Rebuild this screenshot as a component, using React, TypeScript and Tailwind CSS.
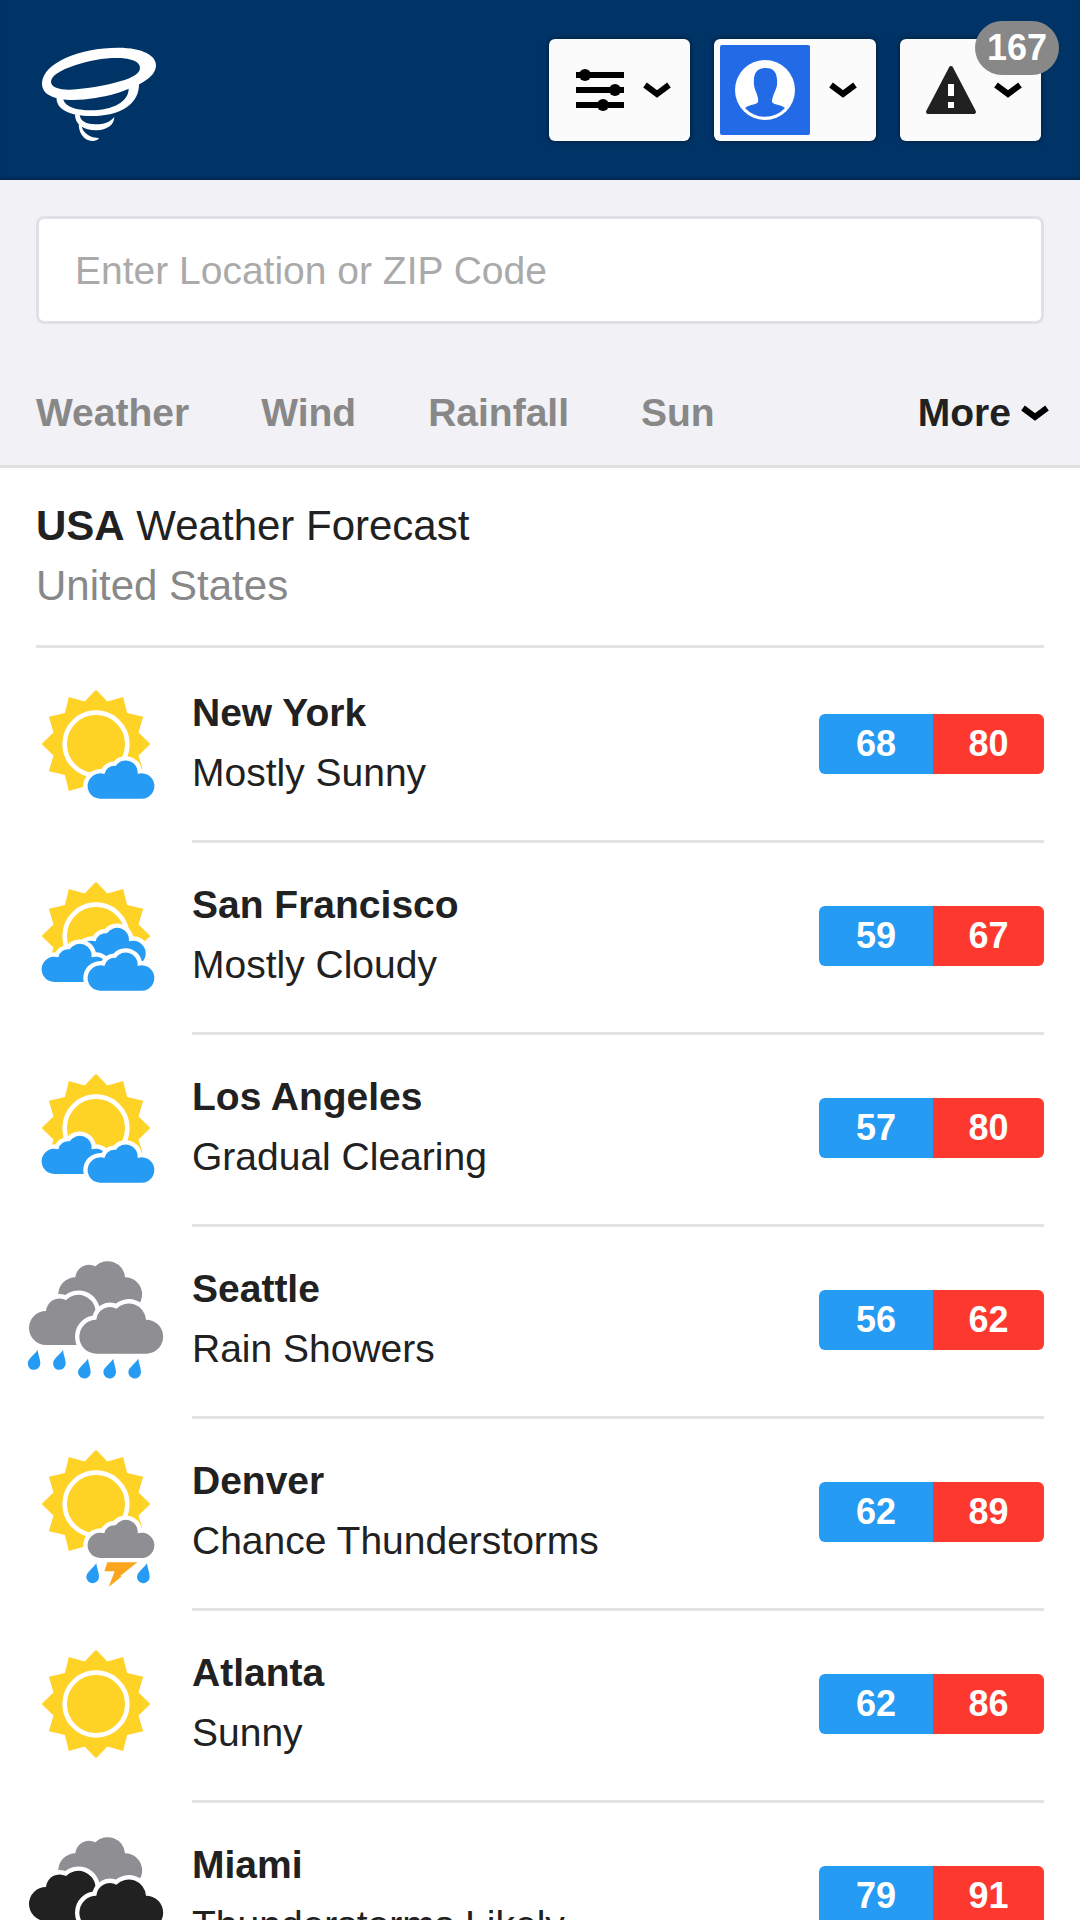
import type { ReactNode } from 'react';

type Condition =
  | 'mostly-sunny'
  | 'mostly-cloudy'
  | 'gradual-clearing'
  | 'rain-showers'
  | 'chance-thunderstorms'
  | 'sunny'
  | 'thunderstorms';

interface CityForecast {
  city: string;
  summary: string;
  condition: Condition;
  low: number;
  high: number;
}

const forecasts: CityForecast[] = [
  { city: 'New York', summary: 'Mostly Sunny', condition: 'mostly-sunny', low: 68, high: 80 },
  { city: 'San Francisco', summary: 'Mostly Cloudy', condition: 'mostly-cloudy', low: 59, high: 67 },
  { city: 'Los Angeles', summary: 'Gradual Clearing', condition: 'gradual-clearing', low: 57, high: 80 },
  { city: 'Seattle', summary: 'Rain Showers', condition: 'rain-showers', low: 56, high: 62 },
  { city: 'Denver', summary: 'Chance Thunderstorms', condition: 'chance-thunderstorms', low: 62, high: 89 },
  { city: 'Atlanta', summary: 'Sunny', condition: 'sunny', low: 62, high: 86 },
  { city: 'Miami', summary: 'Thunderstorms Likely', condition: 'thunderstorms', low: 79, high: 91 },
];

const tabs = ['Weather', 'Wind', 'Rainfall', 'Sun'];

const BLUE = '#269bf4';
const GRAY = '#8e8e93';
const DARK = '#212121';

const SMALL_CLOUD =
  'M38 0A38 38 0 1 1 50 -74A30 30 0 0 1 84 -98A36 36 0 0 1 150 -74A38 38 0 1 1 163 0Z';
const BIG_CLOUD =
  'M51 0A51 51 0 0 1 51 -102A41 41 0 0 1 111 -135A52 52 0 0 1 200 -102A51 51 0 0 1 201 0Z';

// 12 rays, tips and valleys alternate every 15 degrees
const sunPoints = Array.from({ length: 24 }, (_, i) => {
  const r = i % 2 === 0 ? 163 : 132;
  const a = (i * Math.PI) / 12;
  return `${(r * Math.sin(a)).toFixed(1)},${(-r * Math.cos(a)).toFixed(1)}`;
}).join(' ');

function Sun({ y = 0 }: { y?: number }) {
  return (
    <g transform={`translate(0 ${y})`}>
      <polygon points={sunPoints} fill="#ffd226" />
      <circle r="94" fill="none" stroke="#fff" strokeWidth="14" />
    </g>
  );
}

function Cloud({ x, y, fill, big = false }: { x: number; y: number; fill: string; big?: boolean }) {
  return (
    <path
      d={big ? BIG_CLOUD : SMALL_CLOUD}
      transform={`translate(${x} ${y})`}
      fill={fill}
      stroke="#fff"
      strokeWidth="26"
      paintOrder="stroke"
    />
  );
}

function Drop({ x, y }: { x: number; y: number }) {
  return (
    <path
      d="M11 -42C12 -28 19 -16 19 -1A19 19 0 1 1 -17 -10C-9 -22 3 -30 11 -42Z"
      transform={`translate(${x} ${y})`}
      fill={BLUE}
    />
  );
}

const drawings: Record<Condition, ReactNode> = {
  sunny: <Sun />,
  'mostly-sunny': (
    <>
      <Sun />
      <Cloud x={-25} y={164} fill={BLUE} />
    </>
  ),
  'mostly-cloudy': (
    <>
      <Sun />
      <Cloud x={-51} y={90} fill={BLUE} />
      <Cloud x={-163} y={138} fill={BLUE} />
      <Cloud x={-25} y={164} fill={BLUE} />
    </>
  ),
  'gradual-clearing': (
    <>
      <Sun />
      <Cloud x={-163} y={138} fill={BLUE} />
      <Cloud x={-25} y={164} fill={BLUE} />
    </>
  ),
  'rain-showers': (
    <>
      <Cloud big x={-113} y={-26} fill={GRAY} />
      <Cloud big x={-201} y={75} fill={GRAY} />
      <Cloud big x={-50} y={101} fill={GRAY} />
      <Drop x={-186} y={132} />
      <Drop x={-110} y={132} />
      <Drop x={-35} y={158} />
      <Drop x={41} y={158} />
      <Drop x={116} y={158} />
    </>
  ),
  'chance-thunderstorms': (
    <>
      <Sun y={-24} />
      <Cloud x={-25} y={138} fill={GRAY} />
      <Drop x={-10} y={196} />
      <Drop x={142} y={196} />
      <polygon points="34,151 124,151 72,193 78,193 38,225 56,178 25,178" fill="#fca61f" />
    </>
  ),
  thunderstorms: (
    <>
      <Cloud big x={-113} y={-26} fill={GRAY} />
      <Cloud big x={-201} y={75} fill={DARK} />
      <Cloud big x={-50} y={101} fill={DARK} />
      <Drop x={-110} y={132} />
      <Drop x={116} y={158} />
    </>
  ),
};

function WeatherIcon({ condition }: { condition: Condition }) {
  return (
    <svg viewBox="-216 -216 432 432" className="size-36 overflow-visible" aria-hidden="true">
      {drawings[condition]}
    </svg>
  );
}

function Chevron() {
  return (
    <svg viewBox="0 0 28 16" className="w-7 h-4 shrink-0" aria-hidden="true">
      <path d="M2 3L14 12L26 3" fill="none" stroke="#000" strokeWidth="6" />
    </svg>
  );
}

function Logo() {
  return (
    <svg viewBox="126 141 342 282" className="w-[114px] h-[94px]" fill="#fff" aria-hidden="true">
      <path
        fillRule="evenodd"
        d="M126 248C130 190 235 143 355 143C430 143 468 168 468 195C468 234 415 258 350 280C310 292 262 300 220 300C160 300 124 282 126 248ZM153 246C153 262 180 270 210 269C260 267 320 256 360 244C400 232 420 220 420 203C420 182 385 174 350 174C310 174 265 182 225 196C180 211 153 228 153 246Z"
      />
      <path d="M170 290C166 325 205 348 275 348C360 348 420 312 417 248L386 264C387 305 340 331 270 331C215 330 190 315 189 292Z" />
      <path d="M225 343C224 376 255 392 290 391C320 390 343 375 343 351C330 368 305 374 285 373C255 371 241 362 239 344Z" />
      <path d="M236 374C238 405 256 423 280 423C289 422 295 419 297 414C272 414 249 402 244 376Z" />
    </svg>
  );
}

function Header() {
  return (
    <header className="flex items-center justify-between bg-[#003366] h-[180px] pl-[42px] pr-[39px] shadow-[inset_0_-3px_2px_-1px_rgba(0,0,0,0.25)]">
      <a href="#" aria-label="Home" className="pt-2">
        <Logo />
      </a>
      <div className="flex gap-6">
        <HeaderButton label="Settings">
          <svg viewBox="0 0 48 48" className="size-12" aria-hidden="true">
            <path d="M0 9H48M0 24H48M0 39H48" stroke="#000" strokeWidth="6" />
            <circle cx="9" cy="9" r="6" />
            <circle cx="39" cy="24" r="6" />
            <circle cx="27" cy="39" r="6" />
          </svg>
        </HeaderButton>
        <button
          type="button"
          aria-label="Account"
          className="flex items-center gap-[19px] h-[102px] p-[6px] pr-[19px] bg-[#fbfbfb] rounded-md shadow-[0_0_5px_rgba(0,0,0,0.5)]"
        >
          <svg viewBox="0 0 90 90" className="size-[90px] rounded-[2px] bg-[#226ae6]" aria-hidden="true">
            <circle cx="45" cy="45" r="30" fill="#fff" />
            <path
              d="M38 57C39 51 35 47 34 40C33 28 37 23 46 23C54 23 58 28 57 40C56 46 52 51 52 57C54 60 60 59 65 63A27 27 0 0 1 25 63C30 59 36 60 38 57Z"
              fill="#226ae6"
            />
          </svg>
          <Chevron />
        </button>
        <HeaderButton label="Alerts" badge={167}>
          <svg viewBox="0 0 48 48" className="size-12 overflow-visible" aria-hidden="true">
            <path
              d="M24 2L47 46H1Z"
              fill={DARK}
              stroke={DARK}
              strokeWidth="4"
              strokeLinejoin="round"
            />
            <path d="M21 18h6v12h-6zM21 36h6v6h-6z" fill="#fff" />
          </svg>
        </HeaderButton>
      </div>
    </header>
  );
}

function HeaderButton({
  label,
  badge,
  children,
}: {
  label: string;
  badge?: number;
  children: ReactNode;
}) {
  return (
    <button
      type="button"
      aria-label={label}
      className="relative flex items-center gap-[19px] h-[102px] pl-[27px] pr-[19px] bg-[#fbfbfb] rounded-md shadow-[0_0_5px_rgba(0,0,0,0.5)]"
    >
      {children}
      <Chevron />
      {badge && (
        <span className="absolute -top-[18px] -right-[18px] px-3 rounded-full bg-[#888888] text-white text-4xl leading-[54px] font-bold">
          {badge}
        </span>
      )}
    </button>
  );
}

function ForecastRow({ item }: { item: CityForecast }) {
  return (
    <li className="group flex pr-9">
      <div className="flex items-center w-[168px] ml-6 shrink-0">
        <WeatherIcon condition={item.condition} />
      </div>
      <div className="flex flex-1 items-center justify-between border-t-[3px] border-[#e3e3e3] group-first:border-transparent pt-8 pb-[35px]">
        <div className="text-[39px] leading-[60px] pb-[2px]">
          <h2 className="font-bold">{item.city}</h2>
          <p>{item.summary}</p>
        </div>
        <div className="flex rounded-md overflow-hidden text-white text-center text-4xl leading-[60px] font-bold">
          <span className="w-[114px] bg-[#269bf4]">{item.low}</span>
          <span className="w-[111px] bg-[#fc382f]">{item.high}</span>
        </div>
      </div>
    </li>
  );
}

export default function App() {
  return (
    <div className="min-h-screen bg-white text-[#212121] font-['Liberation_Sans',Arial,sans-serif]">
      <Header />
      <div className="bg-[#f1f1f6] border-b-[3px] border-[#e0e0e0] pt-9">
        <form className="px-9" onSubmit={(e) => e.preventDefault()}>
          <input
            type="text"
            aria-label="Location"
            placeholder="Enter Location or ZIP Code"
            className="w-full h-[108px] px-9 pt-[2px] bg-white border-[3px] border-[#e0e0e5] rounded-lg text-[39px] placeholder:text-[#aaaaaa] outline-none"
          />
        </form>
        <nav className="flex items-center justify-between pl-9 pr-[31px] pt-[59px] pb-[22px] text-[39px] leading-[60px] font-bold">
          <div className="flex gap-[72px] text-[#888888]">
            {tabs.map((tab) => (
              <a key={tab} href="#">
                {tab}
              </a>
            ))}
          </div>
          <button type="button" className="flex items-center gap-2.5">
            More
            <Chevron />
          </button>
        </nav>
      </div>
      <main>
        <div className="mx-9 pt-7 pb-[29px] border-b-[3px] border-[#e3e3e3] text-[42px] leading-[60px]">
          <h1>
            <b>USA</b> Weather Forecast
          </h1>
          <p className="text-[#888888]">United States</p>
        </div>
        <ul>
          {forecasts.map((item) => (
            <ForecastRow key={item.city} item={item} />
          ))}
        </ul>
      </main>
    </div>
  );
}
